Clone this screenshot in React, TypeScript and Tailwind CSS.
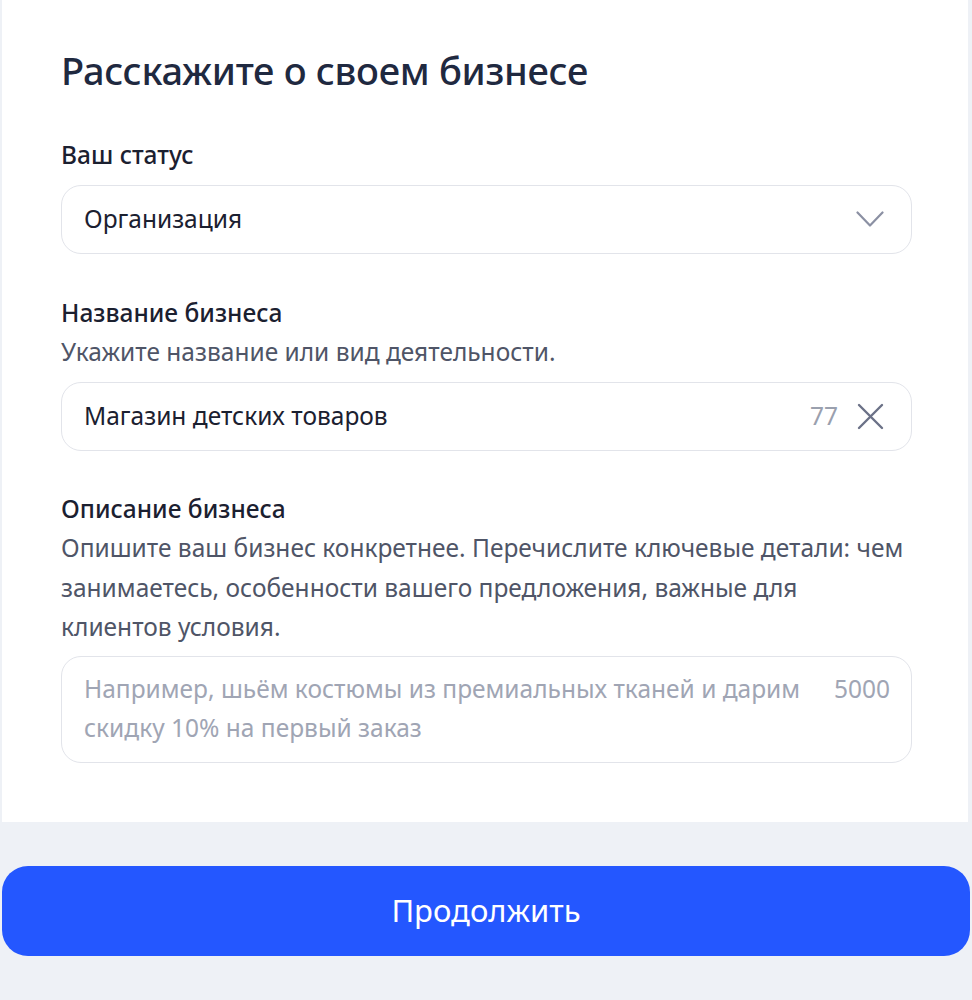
const font = { fontFamily: '"Noto Sans", "Open Sans", sans-serif' };

export default function App() {
  return (
    <main className="min-h-[1000px] w-full bg-[#eef1f6]" style={font}>
      <section className="mr-[4px] ml-[2px] bg-white pt-[44px] pr-[56px] pb-[59px] pl-[59px]">
        <h1 className="text-[38px] leading-[52px] font-medium tracking-[-0.3px] text-[#1f2940]">
          Расскажите о своем бизнесе
        </h1>

        <p className="mt-[43px] text-[24.5px] leading-[32px] font-medium text-[#1b2030]">Ваш статус</p>
        <div className="mt-[14px] flex h-[69px] items-center justify-between rounded-[20px] border border-[#e2e4ea] pr-[27px] pl-[22px]">
          <span className="text-[24.5px] text-[#1b2030]">Организация</span>
          <svg width="28" height="17" viewBox="0 0 28 17" fill="none">
            <path d="M1.5 1.5 L14 14.5 L26.5 1.5" stroke="#8b90a3" strokeWidth="2.2" strokeLinecap="round" strokeLinejoin="round" />
          </svg>
        </div>

        <p className="mt-[43px] text-[24.5px] leading-[32px] font-medium text-[#1b2030]">Название бизнеса</p>
        <p className="mt-[7px] text-[24.5px] leading-[32px] text-[#4f5567]">
          Укажите название или вид деятельности.
        </p>
        <div className="mt-[14px] flex h-[69px] items-center justify-between rounded-[20px] border border-[#e2e4ea] pr-[27px] pl-[22px]">
          <span className="text-[24.5px] text-[#1b2030]">Магазин детских товаров</span>
          <div className="flex items-center gap-[19px]">
            <span className="text-[24.5px] text-[#9aa0ae]">77</span>
            <svg width="27" height="27" viewBox="0 0 27 27" fill="none">
              <path d="M2 2 L25 25 M25 2 L2 25" stroke="#6b7187" strokeWidth="2.4" strokeLinecap="round" />
            </svg>
          </div>
        </div>

        <p className="mt-[42px] text-[24.5px] leading-[32px] font-medium text-[#1b2030]">Описание бизнеса</p>
        <p className="mt-[3px] text-[24.5px] leading-[39.5px] text-[#4f5567]">
          Опишите ваш бизнес конкретнее. Перечислите ключевые детали: чем занимаетесь, особенности
          вашего предложения, важные для клиентов условия.
        </p>
        <div className="mt-[9px] flex h-[107px] justify-between gap-6 rounded-[20px] border border-[#e2e4ea] pt-[12px] pr-[21px] pl-[22px]">
          <p className="max-w-[730px] text-[24.5px] leading-[39px] text-[#a0a5b4]">
            Например, шьём костюмы из премиальных тканей и дарим скидку 10% на первый заказ
          </p>
          <span className="text-[24.5px] leading-[39px] text-[#a0a5b4]">5000</span>
        </div>
      </section>

      <div className="px-[2px] pt-[44px]">
        <button className="flex h-[90px] w-full items-center justify-center rounded-[26px] bg-[#2457ff] text-[31px] text-white">
          Продолжить
        </button>
      </div>
    </main>
  );
}
